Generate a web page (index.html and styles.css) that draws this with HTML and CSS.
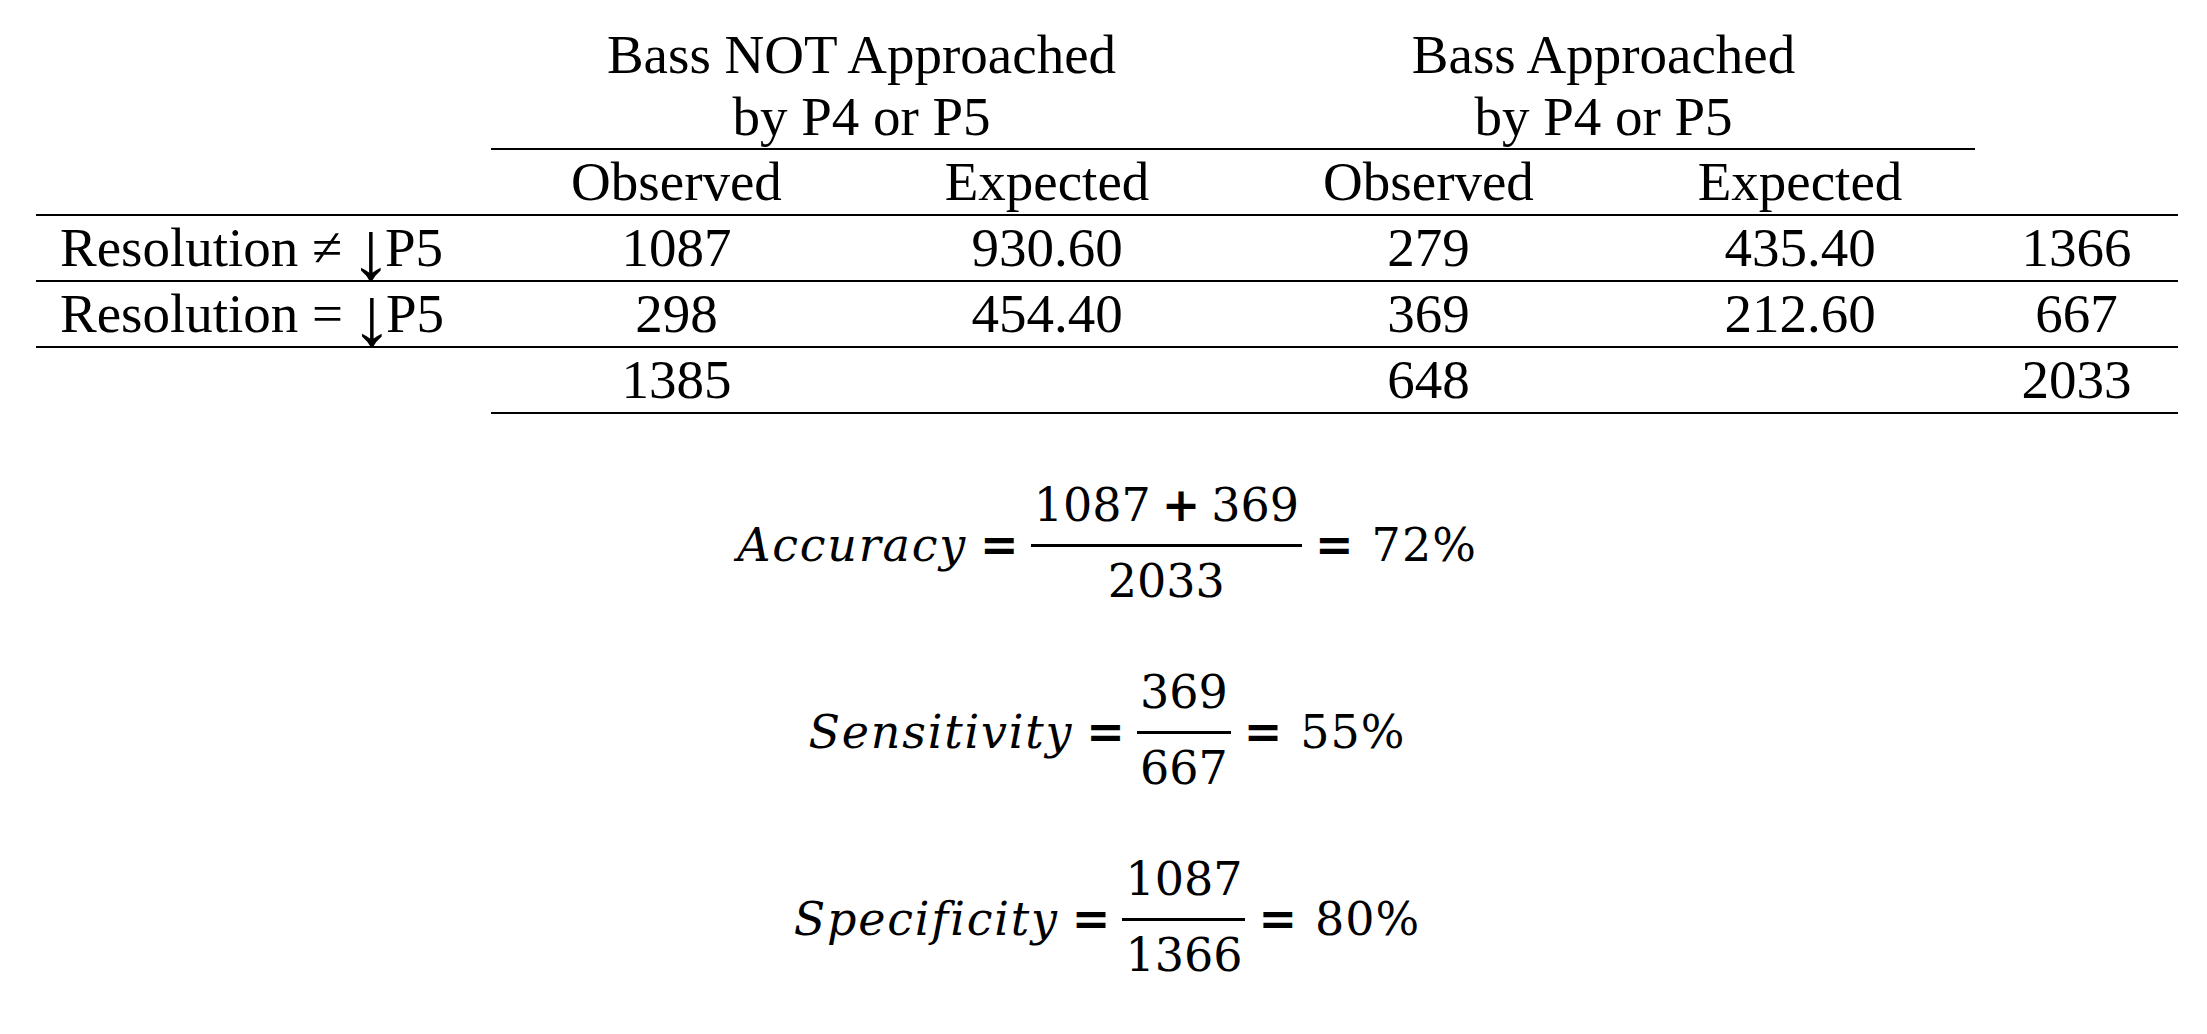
FILE: index.html
```html
<!DOCTYPE html>
<html lang="en">
<head>
<meta charset="utf-8">
<title>Contingency table</title>
<link rel="stylesheet" href="styles.css">
</head>
<body>
<div class="page">
  <table class="ct">
    <colgroup>
      <col class="c0"><col class="c1"><col class="c2"><col class="c3"><col class="c4"><col class="c5">
    </colgroup>
    <tr class="head">
      <td></td>
      <td colspan="2" class="grp">Bass NOT Approached<br>by P4 or P5</td>
      <td colspan="2" class="grp">Bass Approached<br>by P4 or P5</td>
      <td></td>
    </tr>
    <tr class="row ruled">
      <td></td><td>Observed</td><td>Expected</td><td>Observed</td><td>Expected</td><td></td>
    </tr>
    <tr class="row ruled">
      <td class="lbl">Resolution ≠ <span class="arr">↓</span>P5</td><td>1087</td><td>930.60</td><td>279</td><td>435.40</td><td>1366</td>
    </tr>
    <tr class="row ruled">
      <td class="lbl">Resolution = <span class="arr">↓</span>P5</td><td>298</td><td>454.40</td><td>369</td><td>212.60</td><td>667</td>
    </tr>
    <tr class="row ruled total">
      <td class="blank"></td><td>1385</td><td></td><td>648</td><td></td><td>2033</td>
    </tr>
  </table>

  <div class="eqs">
    <div class="eq">
      <span class="var">Accuracy</span><span class="op">=</span><span class="frac"><span class="num">1087<span class="bin">+</span>369</span><span class="bar"></span><span class="den">2033</span></span><span class="op">=</span><span class="res">72%</span>
    </div>
    <div class="eq">
      <span class="var">Sensitivity</span><span class="op">=</span><span class="frac"><span class="num">369</span><span class="bar"></span><span class="den">667</span></span><span class="op">=</span><span class="res">55%</span>
    </div>
    <div class="eq">
      <span class="var">Specificity</span><span class="op">=</span><span class="frac"><span class="num">1087</span><span class="bar"></span><span class="den">1366</span></span><span class="op">=</span><span class="res">80%</span>
    </div>
  </div>
</div>
</body>
</html>
```

FILE: styles.css
```css
html, body {
  margin: 0;
  padding: 0;
  background: #ffffff;
  color: #000000;
}

.page {
  width: 2142px;
  margin-left: 36px;
  padding-top: 24px;
}

.ct {
  table-layout: fixed;
  width: 2142px;
  border-collapse: separate;
  border-spacing: 0;
  font-family: "Liberation Serif", "Times New Roman", serif;
  font-size: 55px;
}

.c0 { width: 455px; }
.c1 { width: 371px; }
.c2 { width: 370px; }
.c3 { width: 393px; }
.c4 { width: 350px; }
.c5 { width: 203px; }

.ct td {
  padding: 0;
  text-align: center;
  vertical-align: top;
  white-space: nowrap;
}

.head td {
  line-height: 62px;
}

.head .grp {
  border-bottom: 2px solid #000;
}

.row td {
  line-height: 64px;
  height: 64px;
}

.ruled td {
  border-bottom: 2px solid #000;
}

.total td.blank {
  border-bottom: none;
}

.ct td.lbl {
  text-align: left;
  padding-left: 24px;
}

.arr {
  font-size: 84px;
  line-height: 0;
  vertical-align: -13px;
  margin-left: -6px;
  margin-right: -7px;
}

/* equations */
.eqs {
  margin-top: 68px;
  display: flex;
  flex-direction: column;
  align-items: center;
  gap: 62px;
  font-family: "DejaVu Serif", serif;
  font-size: 46px;
}

.eq {
  display: flex;
  align-items: center;
  line-height: 1;
}

.var {
  font-style: italic;
  letter-spacing: 1.8px;
}

.op {
  font-weight: bold;
  margin: 0 12px 0 13px;
}

.frac {
  display: flex;
  flex-direction: column;
  align-items: stretch;
  margin-bottom: 3px;
}

.num, .den {
  display: block;
  text-align: center;
  padding: 0 3px;
  white-space: nowrap;
}

.num {
  margin-bottom: 16px;
}

.den {
  margin-top: 11px;
}

.bar {
  display: block;
  height: 3px;
  background: #000;
}

.bin {
  font-weight: bold;
  margin: 0 11px;
}

.res {
  margin-left: 6px;
  letter-spacing: 1px;
}
```
